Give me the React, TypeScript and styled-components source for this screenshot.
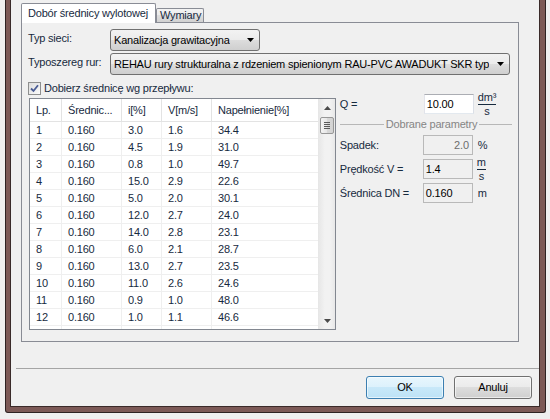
import React from 'react'
import styled, { createGlobalStyle } from 'styled-components'

const TEXT = '#172a3e'

const GlobalStyle = createGlobalStyle`
  body {
    margin: 0;
    background: #efefef;
    font-family: "Liberation Sans", Arial, sans-serif;
    font-size: 11px;
    letter-spacing: -0.2px;
    color: ${TEXT};
  }
`

const Screen = styled.div`
  width: 550px;
  height: 419px;
  overflow: hidden;
`

// brown window border, the title bar is cut off above the picture
const WindowFrame = styled.div`
  box-sizing: border-box;
  width: 541px;
  height: 413px;
  margin-left: 5px;
  padding: 0 5px 5px 4px;
  background: #7c5956;
  border: 1px solid #2e2222;
  border-top: none;
  border-radius: 0 0 3px 3px;
`

const WindowBody = styled.div`
  box-sizing: border-box;
  height: 100%;
  background: #f0f0f0;
  border: 1px solid #3a2a29;
  border-top: none;
  display: flex;
  flex-direction: column;
`

const TabArea = styled.div`
  padding: 3px 20px 0 10px;
`

const TabStrip = styled.div`
  display: flex;
  align-items: flex-end;
  height: 19px;
`

const Tab = styled.div<{ $active?: boolean; $width: number }>`
  box-sizing: border-box;
  position: relative;
  z-index: ${p => (p.$active ? 1 : 0)};
  width: ${p => p.$width}px;
  height: ${p => (p.$active ? 20 : 14)}px;
  margin-bottom: ${p => (p.$active ? -1 : 0)}px;
  padding: 0 ${p => (p.$active ? 6 : 3)}px;
  border: 1px solid #898c95;
  border-bottom: none;
  border-radius: 2px 2px 0 0;
  background: ${p =>
    p.$active ? '#ffffff' : 'linear-gradient(#f3f3f3, #ebebeb 50%, #dedede 50%, #d2d2d2)'};
  line-height: ${p => (p.$active ? 18 : 13)}px;
  white-space: nowrap;
`

const TabPanel = styled.div`
  box-sizing: border-box;
  height: 320px;
  padding: 6px;
  border: 1px solid #898c95;
  background: #f0f0f0;
`

const FormGrid = styled.div`
  display: grid;
  grid-template-columns: 82px 1fr;
  row-gap: 2px;
  align-items: start;
`

const FormLabel = styled.div`
  padding-top: 3px;
  line-height: 13px;
`

const Combo = styled.div<{ $width: number }>`
  box-sizing: border-box;
  width: ${p => p.$width}px;
  height: 22px;
  padding: 0 5px 0 3px;
  display: flex;
  align-items: center;
  justify-content: space-between;
  gap: 6px;
  border: 1px solid #707070;
  border-radius: 3px;
  background: linear-gradient(#f2f2f2, #ebebeb 50%, #dddddd 50%, #cfcfcf);
  color: #000;
  white-space: nowrap;
  overflow: hidden;
`

const ComboText = styled.span`
  overflow: hidden;
`

const CheckRow = styled.div`
  margin-top: 7px;
  height: 13px;
  display: flex;
  align-items: center;
  gap: 3px;
  line-height: 13px;
`

const CheckBox = styled.div`
  box-sizing: border-box;
  width: 13px;
  height: 13px;
  border: 1px solid #8e8f8f;
  background: linear-gradient(135deg, #dcdcdc, #fbfbfb);
  display: flex;
  align-items: center;
  justify-content: center;
`

const Lower = styled.div`
  margin: 3px 0 0 1px;
  display: flex;
  align-items: flex-start;
`

const ListView = styled.div`
  box-sizing: border-box;
  width: 310px;
  height: 232px;
  border: 1px solid #828790;
  background: #fff;
  display: flex;
  overflow: hidden;
`

const ListBody = styled.div`
  flex: 1;
  overflow: hidden;
`

const COLS = '32px 60px 40px 50px 108px 1fr'

const HeaderRow = styled.div`
  box-sizing: border-box;
  display: grid;
  grid-template-columns: ${COLS};
  height: 23px;
  border-bottom: 1px solid #e3e3e3;
`

const HeaderCell = styled.div`
  padding-left: 6px;
  border-right: 1px solid #e3e3e3;
  line-height: 22px;
  white-space: nowrap;
  overflow: hidden;
`

const DataRow = styled.div`
  box-sizing: border-box;
  display: grid;
  grid-template-columns: ${COLS};
  height: 17px;
  border-bottom: 1px solid #efefef;
`

const DataCell = styled.div`
  padding-left: 6px;
  border-right: 1px solid #efefef;
  line-height: 16px;
  white-space: nowrap;
`

const ScrollBar = styled.div`
  width: 17px;
  display: flex;
  flex-direction: column;
  background: linear-gradient(90deg, #e6e6e6, #f2f2f2 40%, #f2f2f2 70%, #e8e8e8);
`

const ScrollButton = styled.div`
  height: 17px;
  display: flex;
  align-items: center;
  justify-content: center;
  padding-left: 2px;
`

const ScrollThumb = styled.div`
  box-sizing: border-box;
  width: 14px;
  height: 17px;
  margin: 1px 0 0 2px;
  border: 1px solid #979797;
  border-radius: 2px;
  background: linear-gradient(90deg, #f4f4f4, #e6e6e6 50%, #d9d9d9 50%, #d2d2d2);
  display: flex;
  align-items: center;
  justify-content: center;
`

const ScrollSpacer = styled.div`
  flex: 1;
`

const RightCol = styled.div`
  width: 174px;
  margin: -4px 0 0 4px;
  display: flex;
  flex-direction: column;
`

const FieldRow = styled.div<{ $gap?: number }>`
  display: flex;
  align-items: center;
  height: 20px;
  margin-top: ${p => p.$gap ?? 0}px;
`

const FieldLabel = styled.div<{ $width?: number }>`
  width: ${p => p.$width ?? 83}px;
  white-space: nowrap;
`

const TextBox = styled.div<{ $mode?: 'normal' | 'disabled' | 'readonly' }>`
  box-sizing: border-box;
  width: 50px;
  height: 20px;
  padding: 0 3px 0 2px;
  line-height: 18px;
  border: 1px solid;
  border-color: ${p =>
    p.$mode && p.$mode !== 'normal' ? '#b9b9b9' : '#abadb3 #dbdfe6 #e3e9ef #e2e3ea'};
  background: ${p => (p.$mode && p.$mode !== 'normal' ? '#f0f0f0' : '#fff')};
  color: ${p => (p.$mode === 'disabled' ? '#6d6d6d' : '#000')};
  text-align: ${p => (p.$mode === 'disabled' ? 'right' : 'left')};
`

const Unit = styled.div`
  margin-left: 5px;
`

const Fraction = styled.div`
  margin-left: 4px;
  display: inline-flex;
  flex-direction: column;
  align-items: center;
  line-height: 11px;
`

const FractionBar = styled.div`
  align-self: stretch;
  height: 1px;
  margin: 1px 0;
  background: ${TEXT};
`

const GroupHeader = styled.div`
  margin-top: 3px;
  height: 14px;
  display: flex;
  align-items: center;
  color: #858585;
  white-space: nowrap;

  &::before,
  &::after {
    content: '';
    height: 1px;
    background: #b7b7b7;
  }
  &::before {
    width: 44px;
    margin-right: 2px;
  }
  &::after {
    flex: 1;
    margin-left: 2px;
  }
`

const GroupBody = styled.div`
  margin-top: 4px;
`

const Separator = styled.div`
  height: 1px;
  margin: 26px 0 0 5px;
  background: #a5a5a5;
`

const ButtonRow = styled.div`
  margin-top: 7px;
  padding-right: 7px;
  display: flex;
  justify-content: flex-end;
  gap: 10px;
`

const Button = styled.div<{ $primary?: boolean }>`
  box-sizing: border-box;
  width: 78px;
  height: 23px;
  border: 1px solid ${p => (p.$primary ? '#3c7fb1' : '#707070')};
  border-radius: 3px;
  background: ${p =>
    p.$primary
      ? 'linear-gradient(#e8f6fd, #dcf1fc 50%, #c8e8f9 50%, #bde2f6)'
      : 'linear-gradient(#f2f2f2, #ebebeb 50%, #dddddd 50%, #cfcfcf)'};
  box-shadow: inset 0 0 0 1px rgba(255, 255, 255, 0.6);
  color: #000;
  text-align: center;
  line-height: 21px;
`

const ArrowDown = () => (
  <svg width="7" height="4" viewBox="0 0 7 4">
    <polygon points="0,0 7,0 3.5,4" fill="#000" />
  </svg>
)

const ScrollArrow = ({ up }: { up?: boolean }) => (
  <svg width="7" height="4" viewBox="0 0 7 4">
    <polygon points={up ? '0,4 7,4 3.5,0' : '0,0 7,0 3.5,4'} fill="#4a4a4a" />
  </svg>
)

const Grip = () => (
  <svg width="6" height="8" viewBox="0 0 6 8">
    {[0.5, 2.5, 4.5, 6.5].map(y => (
      <line key={y} x1="0" x2="6" y1={y} y2={y} stroke="#5a5a5a" strokeWidth="1" />
    ))}
  </svg>
)

const rows = [
  ['1', '0.160', '3.0', '1.6', '34.4'],
  ['2', '0.160', '4.5', '1.9', '31.0'],
  ['3', '0.160', '0.8', '1.0', '49.7'],
  ['4', '0.160', '15.0', '2.9', '22.6'],
  ['5', '0.160', '5.0', '2.0', '30.1'],
  ['6', '0.160', '12.0', '2.7', '24.0'],
  ['7', '0.160', '14.0', '2.8', '23.1'],
  ['8', '0.160', '6.0', '2.1', '28.7'],
  ['9', '0.160', '13.0', '2.7', '23.5'],
  ['10', '0.160', '11.0', '2.6', '24.6'],
  ['11', '0.160', '0.9', '1.0', '48.0'],
  ['12', '0.160', '1.0', '1.1', '46.6'],
  ['', '', '', '', ''],
]

const headers = ['Lp.', 'Średnic...', 'i[%]', 'V[m/s]', 'Napełnienie[%]']

function App() {
  return (
    <Screen>
      <GlobalStyle />
      <WindowFrame>
        <WindowBody>
          <TabArea>
            <TabStrip>
              <Tab $active $width={135}>Dobór średnicy wylotowej</Tab>
              <Tab $width={48}>Wymiary</Tab>
            </TabStrip>
            <TabPanel>
              <FormGrid>
                <FormLabel>Typ sieci:</FormLabel>
                <Combo $width={150}>
                  <ComboText>Kanalizacja grawitacyjna</ComboText>
                  <ArrowDown />
                </Combo>
                <FormLabel>Typoszereg rur:</FormLabel>
                <Combo $width={400}>
                  <ComboText>REHAU rury strukturalna z rdzeniem spienionym RAU-PVC AWADUKT SKR typ</ComboText>
                  <ArrowDown />
                </Combo>
              </FormGrid>

              <CheckRow>
                <CheckBox>
                  <svg width="9" height="9" viewBox="0 0 9 9">
                    <path d="M1 4.5 L3.5 7 L8 1.2" fill="none" stroke="#4a5c94" strokeWidth="1.8" />
                  </svg>
                </CheckBox>
                <span>Dobierz średnicę wg przepływu:</span>
              </CheckRow>

              <Lower>
                <ListView>
                  <ListBody>
                    <HeaderRow>
                      {headers.map(h => (
                        <HeaderCell key={h}>{h}</HeaderCell>
                      ))}
                      <HeaderCell />
                    </HeaderRow>
                    {rows.map((r, i) => (
                      <DataRow key={i}>
                        {r.map((c, j) => (
                          <DataCell key={j}>{c}</DataCell>
                        ))}
                        <DataCell />
                      </DataRow>
                    ))}
                  </ListBody>
                  <ScrollBar>
                    <ScrollButton>
                      <ScrollArrow up />
                    </ScrollButton>
                    <ScrollThumb>
                      <Grip />
                    </ScrollThumb>
                    <ScrollSpacer />
                    <ScrollButton>
                      <ScrollArrow />
                    </ScrollButton>
                  </ScrollBar>
                </ListView>

                <RightCol>
                  <FieldRow>
                    <FieldLabel $width={84}>Q =</FieldLabel>
                    <TextBox>10.00</TextBox>
                    <Fraction>
                      <span>dm³</span>
                      <FractionBar />
                      <span>s</span>
                    </Fraction>
                  </FieldRow>
                  <GroupHeader>Dobrane parametry</GroupHeader>
                  <GroupBody>
                    <FieldRow>
                      <FieldLabel>Spadek:</FieldLabel>
                      <TextBox $mode="disabled">2.0</TextBox>
                      <Unit>%</Unit>
                    </FieldRow>
                    <FieldRow $gap={4}>
                      <FieldLabel>Prędkość V =</FieldLabel>
                      <TextBox $mode="readonly">1.4</TextBox>
                      <Fraction>
                        <span>m</span>
                        <FractionBar />
                        <span>s</span>
                      </Fraction>
                    </FieldRow>
                    <FieldRow $gap={4}>
                      <FieldLabel>Średnica DN =</FieldLabel>
                      <TextBox $mode="readonly">0.160</TextBox>
                      <Unit>m</Unit>
                    </FieldRow>
                  </GroupBody>
                </RightCol>
              </Lower>
            </TabPanel>
          </TabArea>

          <Separator />
          <ButtonRow>
            <Button $primary>OK</Button>
            <Button>Anuluj</Button>
          </ButtonRow>
        </WindowBody>
      </WindowFrame>
    </Screen>
  )
}

export default App
